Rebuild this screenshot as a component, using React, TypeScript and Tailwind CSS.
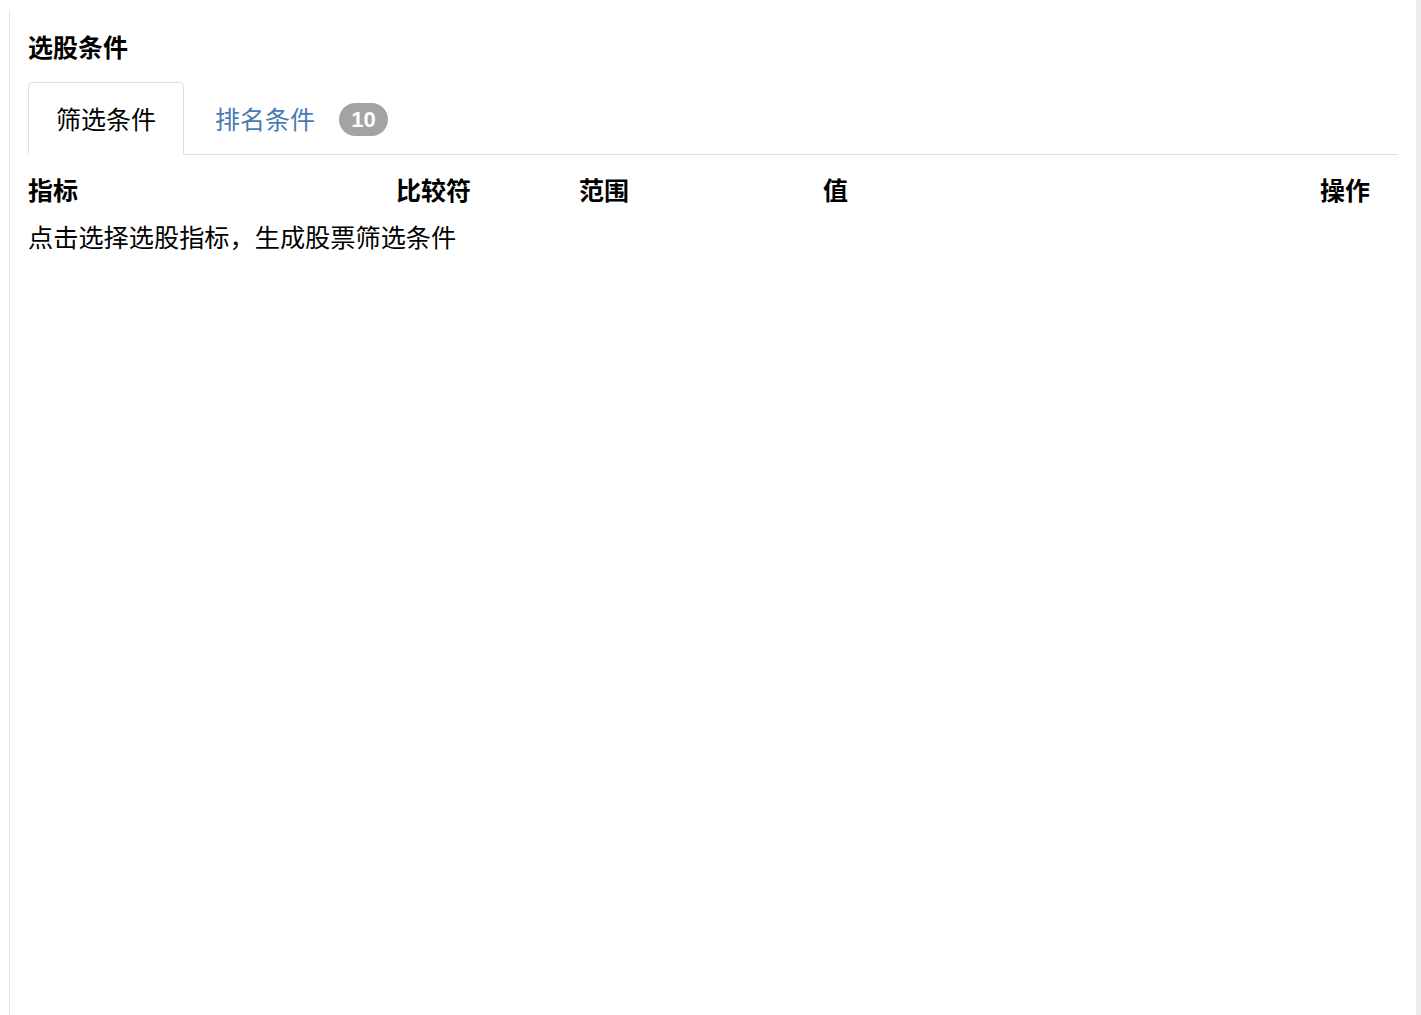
import React from 'react';

const columns = [
  { label: '指标', width: 'w-[368px]' },
  { label: '比较符', width: 'w-[183px]' },
  { label: '范围', width: 'w-[244px]' },
  { label: '值', width: 'w-[497px]' },
  { label: '操作', width: 'w-[78px]' },
];

export default function App() {
  return (
    <div
      className="flex h-[1015px] w-full bg-white text-black"
      style={{ fontFamily: '"Noto Sans CJK SC", "Noto Sans", sans-serif' }}
    >
      <div className="w-[9px] shrink-0" />
      <div className="mt-[10px] flex-1 border-l border-[#e5e5e5] pl-[18px] pr-[18px]">
        <h2 className="mt-[20px] h-[32px] text-[25px] font-bold leading-[32px]">选股条件</h2>

        <div className="mt-[20px] flex h-[73px] items-end border-b border-[#dddddd]">
          <button className="-mb-px flex h-[73px] items-center rounded-t-[5px] border border-b-white border-[#dddddd] bg-white px-[27px] text-[25px] leading-none">
            筛选条件
          </button>
          <button className="flex h-[72px] items-center pl-[31px] text-[25px] leading-none text-[#4a7ab5]">
            排名条件
            <span className="ml-[24px] mt-[3px] flex h-[33px] w-[49px] items-center justify-center rounded-full bg-[#a3a3a3] font-['Liberation_Sans',sans-serif] text-[22px] font-bold text-white">
              10
            </span>
          </button>
        </div>

        <div className="mt-[19px] flex text-[25px] font-bold leading-[30px]">
          {columns.map((c) => (
            <div key={c.label} className={c.width}>
              {c.label}
            </div>
          ))}
        </div>
        <div className="mt-[17px] text-[25.2px] leading-[30px]">点击选择选股指标，生成股票筛选条件</div>
      </div>
      <div className="w-[5px] shrink-0 bg-[#eeeeee]" />
    </div>
  );
}
